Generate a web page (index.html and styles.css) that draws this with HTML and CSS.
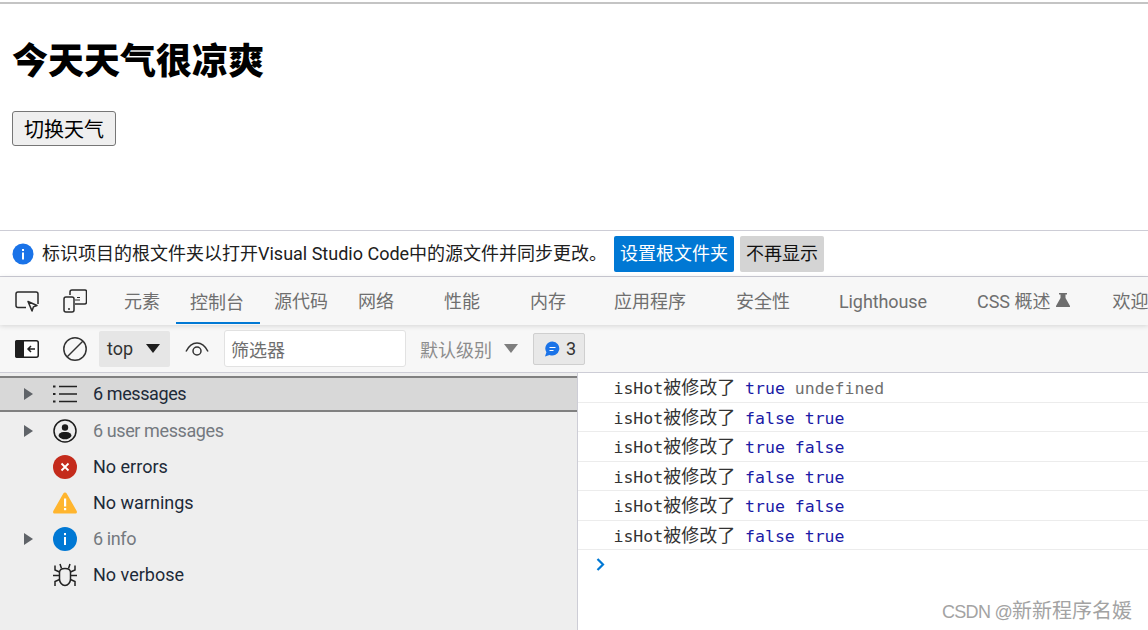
FILE: index.html
```html
<!DOCTYPE html>
<html lang="zh">
<head>
<meta charset="utf-8">
<title>今天天气很凉爽</title>
<link rel="stylesheet" href="styles.css">
</head>
<body>
<div class="page">
  <h1>今天天气很凉爽</h1>
  <button class="switch">切换天气</button>
</div>
<div class="infobar">
  <svg class="info-icon" width="22" height="22" viewBox="0 0 22 22"><circle cx="11" cy="11" r="10.5" fill="#1a73e8"/><rect x="10" y="9.5" width="2" height="7" fill="#fff"/><rect x="10" y="6" width="2" height="2" fill="#fff"/></svg>
  <span class="info-text">标识项目的根文件夹以打开Visual Studio Code中的源文件并同步更改。</span>
  <button class="btn primary">设置根文件夹</button>
  <button class="btn muted">不再显示</button>
</div>
<div class="tabs">
  <svg class="tool-a" width="24" height="24" viewBox="0 0 24 24" fill="none" stroke="#2b2b2b" stroke-width="1.5"><path d="M11 18.5H3a2 2 0 0 1-2-2V5a2 2 0 0 1 2-2h18a2 2 0 0 1 2 2v10"/><path d="M13 12.5l9 4-3.6 1.4-1.4 4z" stroke-linejoin="round"/></svg>
  <svg class="tool-b" width="24" height="24" viewBox="0 0 24 24" fill="none" stroke="#2b2b2b" stroke-width="1.5"><path d="M7 6V3a2 2 0 0 1 2-2h13a1.500 1.500 0 0 1 1.500 1.500V13a2 2 0 0 1-2 2H12"/><path d="M12 11h5M14 8.500h3" stroke-width="1.200"/><rect x="1" y="8" width="10" height="15" rx="2"/><path d="M5 20h2"/></svg>
  <span class="tab first">元素</span>
  <span class="tab active">控制台</span>
  <span class="tab">源代码</span>
  <span class="tab net">网络</span>
  <span class="tab wide">性能</span>
  <span class="tab wide">内存</span>
  <span class="tab wide apps">应用程序</span>
  <span class="tab wide">安全性</span>
  <span class="tab wide lighthouse">Lighthouse</span>
  <span class="tab wide">CSS 概述<svg class="flask" width="14" height="14" viewBox="0 0 14 14"><path d="M3 0h8v1.500H9.500V5L14 13a.7.7 0 0 1-.6 1H.6A.7.7 0 0 1 0 13L4.500 5V1.500H3z" fill="#6e6e6e"/></svg></span>
  <span class="tab last">欢迎</span>
</div>
<div class="toolbar">
  <svg class="sidebar-toggle" width="24" height="18" viewBox="0 0 24 18"><rect x=".75" y=".75" width="22.500" height="16.500" rx="2" fill="#fff" stroke="#1f1f1f" stroke-width="1.500"/><path d="M2 0h7v18H2a2 2 0 0 1-2-2V2a2 2 0 0 1 2-2z" fill="#1f1f1f"/><path d="M20 9h-7M16 6l-3 3 3 3" fill="none" stroke="#1f1f1f" stroke-width="1.500"/></svg>
  <svg class="clear" width="24" height="24" viewBox="0 0 24 24" fill="none" stroke="#333" stroke-width="1.500"><circle cx="12" cy="12" r="11.200"/><path d="M4 20L20 4"/></svg>
  <div class="context"><span>top</span><i class="tri dark"></i></div>
  <svg class="eye" width="24" height="14" viewBox="0 0 24 14" fill="none" stroke="#333" stroke-width="1.500"><path d="M1 9.500C4 3.500 8 1 12 1s8 2.500 11 8.500"/><circle cx="12" cy="9" r="4"/></svg>
  <div class="filter">筛选器</div>
  <div class="level"><span>默认级别</span><i class="tri gray"></i></div>
  <div class="badge"><svg width="16" height="16" viewBox="0 0 16 16"><path d="M8.500 0.500a7 7 0 1 1-3 13.400L1 15.500l1.400-4.300A7 7 0 0 1 8.500.5z" fill="#1a73e8"/><path d="M5.500 6.500h6M5.500 9.500h4" stroke="#fff" stroke-width="1.200"/></svg><span>3</span></div>
</div>
<div class="main">
  <aside class="side">
    <div class="row selected"><i class="arrow"></i><span class="ico"><svg width="24" height="20" viewBox="0 0 24 20" stroke="#222" stroke-width="1.500"><path d="M6 2.500h18M6 10h18M6 17.500h18"/><path d="M0 2.500h2.500M0 10h2.500M0 17.500h2.500" stroke-width="2.200"/></svg></span><span class="label tight">6 messages</span></div>
    <div class="row"><i class="arrow"></i><span class="ico"><svg width="24" height="24" viewBox="0 0 24 24"><circle cx="12" cy="12" r="11" fill="none" stroke="#1c1c1c" stroke-width="1.500"/><circle cx="12" cy="8.500" r="3.200" fill="#1c1c1c"/><path d="M5.500 17a5 4 0 0 1 5-4h3a5 4 0 0 1 5 4 8 8 0 0 1-13 0z" fill="#1c1c1c"/></svg></span><span class="label dim tight">6 user messages</span></div>
    <div class="row"><i class="noarrow"></i><span class="ico"><svg width="24" height="24" viewBox="0 0 24 24"><circle cx="12" cy="12" r="12" fill="#c42b1c"/><path d="M8.500 8.500l7 7M15.500 8.500l-7 7" stroke="#fff" stroke-width="1.800"/></svg></span><span class="label">No errors</span></div>
    <div class="row"><i class="noarrow"></i><span class="ico"><svg width="24" height="24" viewBox="0 0 24 24"><path d="M12 1.500c.8 0 1.300.4 1.700 1.100L23.700 20c.6 1.200-.1 2.500-1.500 2.500H1.800C.4 22.500-.3 21.200.3 20l10-17.400c.4-.7.9-1.100 1.700-1.100z" fill="#ffb52e"/><rect x="11" y="7.500" width="2.200" height="8" fill="#fff"/><rect x="11" y="17" width="2.200" height="2.200" fill="#fff"/></svg></span><span class="label">No warnings</span></div>
    <div class="row"><i class="arrow"></i><span class="ico"><svg width="24" height="24" viewBox="0 0 24 24"><circle cx="12" cy="12" r="12" fill="#0078d4"/><rect x="11" y="10" width="2" height="8" fill="#fff"/><rect x="11" y="6" width="2" height="2.200" fill="#fff"/></svg></span><span class="label dim tight">6 info</span></div>
    <div class="row"><i class="noarrow"></i><span class="ico"><svg width="24" height="24" viewBox="0 0 24 24" fill="none" stroke="#222" stroke-width="1.500"><path d="M6.500 9.500c0-2.500 2-4 5.500-4s5.500 1.500 5.500 4V16c0 3.500-2.500 6.500-5.500 6.500S6.500 19.500 6.500 16z"/><path d="M8.500 5.500L7 1M15.500 5.500L17 1M0 12.500h6.500M17.500 12.500H24M6.500 9L2 7V2.500M17.500 9L22 7V2.500M6.500 16.500L2 18.500V23M17.500 16.500l4.500 2V23"/></svg></span><span class="label">No verbose</span></div>
  </aside>
  <section class="console">
    <div class="line"><span class="mono">isHot</span><span class="cjk">被修改了</span> <span class="mono val">true</span> <span class="mono undef">undefined</span></div>
    <div class="line"><span class="mono">isHot</span><span class="cjk">被修改了</span> <span class="mono val">false</span> <span class="mono val">true</span></div>
    <div class="line"><span class="mono">isHot</span><span class="cjk">被修改了</span> <span class="mono val">true</span> <span class="mono val">false</span></div>
    <div class="line"><span class="mono">isHot</span><span class="cjk">被修改了</span> <span class="mono val">false</span> <span class="mono val">true</span></div>
    <div class="line"><span class="mono">isHot</span><span class="cjk">被修改了</span> <span class="mono val">true</span> <span class="mono val">false</span></div>
    <div class="line"><span class="mono">isHot</span><span class="cjk">被修改了</span> <span class="mono val">false</span> <span class="mono val">true</span></div>
    <div class="prompt"><svg width="9" height="13" viewBox="0 0 9 13" fill="none" stroke="#0078d4" stroke-width="2.200"><path d="M1.500 1l5.500 5.500L1.500 12"/></svg></div>
  </section>
</div>
<div class="watermark"><span class="wm-latin">CSDN @</span>新新程序名媛</div>
</body>
</html>
```
FILE: styles.css
```css
* { box-sizing: border-box; }
html, body { margin: 0; padding: 0; }
body {
  position: relative;
  width: 1148px;
  height: 630px;
  overflow: hidden;
  background: #fff;
  font-family: Roboto, "Noto Sans CJK SC", sans-serif;
  font-size: 18px;
  color: #202020;
  display: flex;
  flex-direction: column;
}
.page {
  height: 230px;
  flex: none;
  margin-top: 2px;
  border-top: 2px solid #c4c4c4;
  padding: 0 12px;
}
h1 {
  margin: 0;
  padding-top: 30px;
  font-family: "Noto Sans CJK SC", sans-serif;
  font-size: 36px;
  font-weight: 900;
  line-height: 48px;
  color: #000;
}
.switch {
  display: block;
  margin-top: 29px;
  width: 104px;
  height: 35px;
  padding: 0;
  border: 1px solid #767676;
  border-radius: 3px;
  background: #efefef;
  font-family: "Noto Sans CJK SC", sans-serif;
  font-size: 20px;
  line-height: 33px;
  color: #000;
}
.infobar {
  flex: none;
  height: 47px;
  margin-top: -2px;
  border-top: 1px solid #cdcdd6;
  border-bottom: 1px solid #cdcdd6;
  display: flex;
  align-items: center;
  padding-left: 12px;
}
.info-icon { flex: none; }
.info-text { width: 572px; margin-left: 8px; white-space: nowrap; line-height: 24px; }
.btn {
  height: 36px;
  padding: 0 0 4px;
  border: 0;
  border-radius: 2px;
  font-family: "Noto Sans CJK SC", sans-serif;
  font-size: 18px;
}
.primary { width: 120px; background: #0078d4; color: #fff; }
.muted { width: 84px; margin-left: 6px; background: #d4d4d4; color: #111; }
.tabs {
  flex: none;
  position: relative;
  z-index: 2;
  height: 48px;
  background: #f7f7f7;
  box-shadow: 0 1px 5px rgba(0,0,0,.14);
  display: flex;
  align-items: center;
  padding-left: 15px;
  overflow: hidden;
  white-space: nowrap;
  color: #6f6f6f;
}
.tool-a, .tool-b { flex: none; }
.tool-b { margin-left: 24px; }
.tab {
  flex: none;
  height: 48px;
  line-height: 49px;
  padding: 0 15px;
  display: block;
}
.tab.first { margin-left: 22px; }
.tab.net { padding-right: 25px; }
.tab.wide { padding: 0 25px; }
.tab.apps { margin-left: -2px; }
.tab.lighthouse { margin-left: -1px; letter-spacing: -.1px; }
.tab.last { padding-left: 17px; }
.tab.active { padding: 0 16px 0 14px; border-bottom: 2px solid #0078d4; height: 46px; margin: 0 -1px 0 1px; }
.flask { margin-left: 6px; vertical-align: 1px; }
.toolbar {
  flex: none;
  height: 48px;
  background: #f7f7f7;
  border-bottom: 1px solid #cdcdd6;
  display: flex;
  align-items: center;
  padding-left: 15px;
}
.sidebar-toggle, .clear, .eye { flex: none; }
.clear { margin-left: 24px; }
.context {
  width: 71px;
  height: 36px;
  margin-left: 12px;
  background: #e6e6e6;
  border-radius: 2px;
  display: flex;
  align-items: center;
  padding-left: 8px;
  color: #333;
}
.context .tri { margin-left: 13px; }
.tri { display: block; width: 0; height: 0; border-left: 7px solid transparent; border-right: 7px solid transparent; }
.tri.dark { border-top: 9px solid #1d1d1d; }
.tri.gray { border-top: 9px solid #7e7e7e; margin-left: 12px; }
.eye { margin-left: 15px; }
.filter {
  width: 182px;
  height: 37px;
  margin-left: 15px;
  margin-top: -1px;
  background: #fff;
  border: 1px solid #e2e2e2;
  border-radius: 3px;
  padding-left: 6px;
  line-height: 37px;
  color: #6f6f6f;
  font-family: "Noto Sans CJK SC", sans-serif;
}
.level { display: flex; align-items: center; margin-left: 14px; color: #8c8c8c; }
.badge {
  width: 52px;
  height: 32px;
  margin-left: 15px;
  background: #e8e8e8;
  border: 1px solid #cfcfcf;
  border-radius: 2px;
  display: flex;
  align-items: center;
  padding-left: 10px;
  gap: 6px;
  color: #333;
}
.main { flex: 1; display: flex; min-height: 0; }
.side {
  width: 578px;
  flex: none;
  background: #eee;
  border-right: 1px solid #cdcdd6;
  padding-top: 3px;
}
.row {
  height: 36px;
  display: flex;
  align-items: center;
}
.row.selected {
  background: #d8d8d8;
  border-top: 2px solid #808080;
  border-bottom: 2px solid #808080;
  margin-bottom: 1px;
}
.arrow {
  display: block;
  width: 0;
  height: 0;
  margin-left: 24px;
  border-left: 9px solid #5f6368;
  border-top: 6.5px solid transparent;
  border-bottom: 6.5px solid transparent;
}
.noarrow { display: block; width: 9px; margin-left: 24px; }
.ico { width: 24px; margin-left: 20px; display: flex; align-items: center; justify-content: center; }
.label { margin-left: 16px; white-space: nowrap; color: #1d2a38; padding-bottom: 1px; }
.label.dim { color: #74797f; }
.label.tight { letter-spacing: -.4px; }
.console { flex: 1; min-width: 0; padding-left: 36px; }
.line {
  height: 29.5px;
  line-height: 27px;
  border-bottom: 1px solid #ececec;
  white-space: nowrap;
  margin-left: -36px;
  padding-left: 35.5px;
  color: #333;
  font-family: "DejaVu Sans Mono", monospace;
  font-size: 16.5px;
}
.mono { font-family: "DejaVu Sans Mono", monospace; font-size: 16.5px; }
.cjk { font-family: "Noto Sans CJK SC", sans-serif; font-size: 18px; }
.val { color: #1a1aa6; }
.undef { color: #6f6f6f; }
.prompt { height: 28px; margin-left: -18px; padding-top: 8px; display: flex; align-items: flex-start; }
.watermark {
  position: absolute;
  left: 942px;
  top: 596px;
  font-family: "Noto Sans CJK SC", sans-serif;
  font-size: 20px;
  line-height: 28px;
  color: #a3a3a3;
  white-space: nowrap;
}
.wm-latin { font-family: "Liberation Sans", sans-serif; font-size: 18px; letter-spacing: -.7px; }
```
